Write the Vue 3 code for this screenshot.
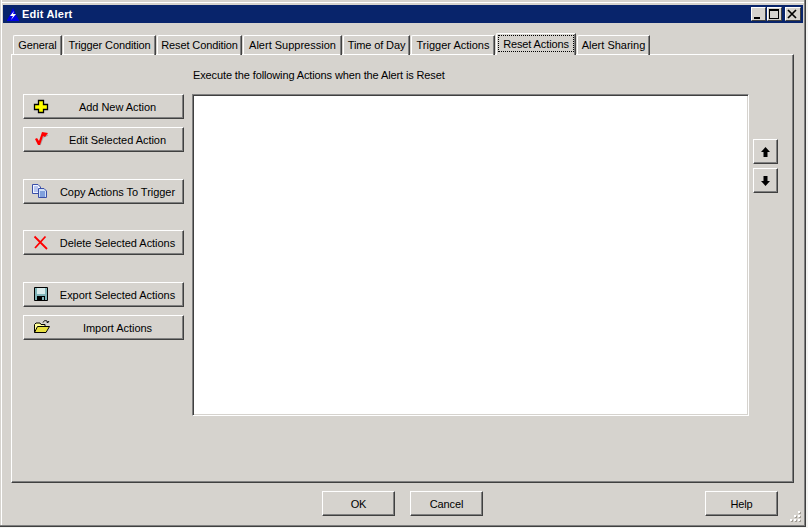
<script setup>
const tabs = [
  { label: 'General', w: 49 },
  { label: 'Trigger Condition', w: 93 },
  { label: 'Reset Condition', w: 85 },
  { label: 'Alert Suppression', w: 99, loose: true },
  { label: 'Time of Day', w: 67 },
  { label: 'Trigger Actions', w: 84, loose: true },
  { label: 'Reset Actions', w: 80, active: true },
  { label: 'Alert Sharing', w: 73, loose: true },
]
</script>

<template>
  <div class="window">
    <div class="titlebar">
      <svg class="app-icon" width="12" height="13" viewBox="0 0 12 13">
        <path d="M6 0L8 4V5L12 12V13H0V12L4 5V4Z" fill="#0000e8" />
        <path d="M7 3L3 8H6L4 12L9 6H6Z" fill="#fff" />
      </svg>
      <span class="title">Edit Alert</span>
      <div class="caption-buttons">
        <div class="cap"><svg width="14" height="12" viewBox="0 0 14 12"><rect x="3" y="9" width="6" height="2" fill="#000" /></svg></div>
        <div class="cap"><svg width="14" height="12" viewBox="0 0 14 12"><path d="M2 1H12V11H2Z M3 3V10H11V3Z" fill="#000" fill-rule="evenodd" /></svg></div>
        <div class="cap cap-close"><svg width="14" height="12" viewBox="0 0 14 12"><path d="M3 2L11 10M11 2L3 10" stroke="#000" stroke-width="1.7" fill="none" /></svg></div>
      </div>
    </div>

    <div class="tabs">
      <div v-for="t in tabs" :key="t.label" class="tab" :class="{ active: t.active, loose: t.loose }" :style="{ width: t.w + 'px' }">
        <span class="tab-label">{{ t.label }}</span>
      </div>
    </div>

    <div class="panel">
      <div class="caption">Execute the following Actions when the Alert is Reset</div>
      <div class="panel-body">
        <div class="actions">
          <button class="btn action">
            <svg class="ico" width="16" height="16" viewBox="0 0 16 16"><path d="M5.5 2.5H10.5V6.5H14.5V11.5H10.5V14.5H5.5V11.5H1.5V6.5H5.5Z" fill="#ffff00" stroke="#000" stroke-width="1.3" /></svg>
            Add New Action
          </button>
          <button class="btn action">
            <svg class="ico" width="16" height="16" viewBox="0 0 16 16"><path d="M7 14L10 6L15 4" stroke="#a8a8a8" stroke-width="1.5" fill="none" /><path d="M2 8L4 7L6 10L9 1L15 2L12 6L10 5L7 14H5Z" fill="#ff0000" /></svg>
            Edit Selected Action
          </button>
          <button class="btn action gap-lg">
            <svg class="ico ico-copy" width="16" height="16" viewBox="0 0 16 16"><path d="M0.5 1.5H6L8.5 4V10.5H0.5Z" fill="#f0f4ff" stroke="#3a4fa8" /><path d="M2 4H6M2 6H6M2 8H6" stroke="#8098e0" /><path d="M6.5 5.5H12L14.5 8V14.5H6.5Z" fill="#d0e0f8" stroke="#3a4fa8" /><path d="M8 9H13M8 11H13M8 13H13" stroke="#3060c0" /></svg>
            Copy Actions To Trigger
          </button>
          <button class="btn action gap-md">
            <svg class="ico" width="16" height="16" viewBox="0 0 16 16"><path d="M1.5 2.5L14 15M12.5 2.5L2 14" stroke="#ff0000" stroke-width="1.8" fill="none" /></svg>
            Delete Selected Actions
          </button>
          <button class="btn action gap-lg">
            <svg class="ico" width="16" height="16" viewBox="0 0 16 16"><path d="M1.5 1.5H14.5V14.5H1.5Z" fill="#7fb4b8" stroke="#000" /><rect x="4" y="2" width="8" height="6" fill="#d8ecec" /><rect x="4" y="10" width="8" height="5" fill="#000" /><rect x="9" y="11" width="2" height="3" fill="#7fb4b8" /></svg>
            Export Selected Actions
          </button>
          <button class="btn action">
            <svg class="ico" width="17" height="16" viewBox="0 0 17 16"><path d="M1.5 13.5V5.5L3 4H7L8 5.5H12V7.5" fill="#ffff99" stroke="#000" /><path d="M1.5 13.5L4.5 7.5H16.5L13 13.5Z" fill="#e8e040" stroke="#000" /><path d="M10 3.5C11 1 14 1 15 3.5M15 3.5L13.5 3M15 3.5L16 2" stroke="#000" fill="none" /></svg>
            Import Actions
          </button>
        </div>
        <div class="list"></div>
        <div class="arrows">
          <button class="btn arrow">
            <svg width="11" height="12" viewBox="0 0 11 12"><path d="M5.5 1L10 6H7.5V11H3.5V6H1Z" fill="#000" /></svg>
          </button>
          <button class="btn arrow">
            <svg width="11" height="12" viewBox="0 0 11 12"><path d="M5.5 11L10 6H7.5V1H3.5V6H1Z" fill="#000" /></svg>
          </button>
        </div>
      </div>
    </div>

    <div class="footer">
      <button class="btn dialog">OK</button>
      <button class="btn dialog">Cancel</button>
      <button class="btn dialog help">Help</button>
    </div>

    <svg class="grip" width="12" height="12" viewBox="0 0 12 12">
      <path d="M9 1h2v2H9zM5 5h2v2H5zM9 5h2v2H9zM1 9h2v2H1zM5 9h2v2H5zM9 9h2v2H9z" fill="#a09c94" />
      <path d="M8 0h2v2H8zM4 4h2v2H4zM8 4h2v2H8zM0 8h2v2H0zM4 8h2v2H4zM8 8h2v2H8z" fill="#fff" />
    </svg>
  </div>
</template>

<style>
html, body { margin: 0; background: #f4f4f2; }
</style>

<style scoped>
.window {
  position: relative;
  box-sizing: border-box;
  width: 806px;
  height: 527px;
  display: flex;
  flex-direction: column;
  background: #d6d3ce;
  border-right: 1px solid #404040;
  border-bottom: 1px solid #404040;
  font-family: "Liberation Sans", Arial, sans-serif;
  font-size: 11px;
  letter-spacing: -0.12px;
  color: #000;
  box-shadow: inset -1px -1px 0 #808080, inset 1px 0 0 #d6d3ce, inset 2px 0 0 #fff, inset 0 2px 0 #d6d3ce, inset 0 3px 0 #fff;
}
.titlebar {
  display: flex;
  align-items: center;
  height: 18px;
  margin: 5px 2px 0 3px;
  background: #08246b;
  color: #fff;
}
.app-icon { margin-left: 4px; flex: none; }
.title { margin-left: 3px; font-weight: bold; font-size: 11px; letter-spacing: 0.2px; }
.caption-buttons { margin-left: auto; display: flex; margin-right: 2px; }
.cap {
  box-sizing: border-box;
  width: 15px;
  height: 14px;
  margin-left: 1px;
  background: #d6d3ce;
  border: 1px solid;
  border-color: #fff #404040 #404040 #fff;
  display: flex;
}
.cap svg { flex: none; margin: 0 0 0 -1px; }
.cap-close { margin-left: 3px; width: 16px; }
.tabs {
  display: flex;
  height: 19px;
  margin: 12px 0 0 13px;
  position: relative;
  z-index: 1;
}
.tab {
  box-sizing: border-box;
  flex: none;
  height: 20px;
  margin-right: 1px;
  border: 1px solid;
  border-color: #fff #404040 transparent #fff;
  border-top-left-radius: 2px;
  border-bottom: 0;
  box-shadow: inset -1px 0 0 #808080;
  text-align: center;
  line-height: 19px;
  white-space: nowrap;
}
.tab.loose { letter-spacing: 0; }
.tab.active {
  height: 22px;
  margin-top: -2px;
  line-height: 16px;
  padding: 1px;
  background: #d6d3ce;
}
.tab.active .tab-label {
  display: block;
  box-sizing: border-box;
  height: 17px;
  border: 1px dotted #000;
}
.panel {
  box-sizing: border-box;
  height: 429px;
  margin: 0 11px;
  padding: 12px 0 0 11px;
  border: 1px solid;
  border-color: #fff #404040 #404040 #fff;
  box-shadow: inset -1px -1px 0 #808080;
  flex: none;
}
.caption {
  height: 16px;
  line-height: 16px;
  margin: 0 0 11px 170px;
  white-space: nowrap;
}
.panel-body {
  display: flex;
}
.actions {
  display: flex;
  flex-direction: column;
  width: 161px;
  gap: 8px;
  flex: none;
}
.btn {
  box-sizing: border-box;
  position: relative;
  background: #d6d3ce;
  border: 1px solid;
  border-color: #fff #404040 #404040 #fff;
  box-shadow: inset -1px -1px 0 #808080;
  font: inherit;
  letter-spacing: inherit;
  color: #000;
  padding: 0;
  margin: 0;
}
.action {
  height: 25px;
  width: 161px;
  padding-left: 28px;
  letter-spacing: -0.04px;
  text-align: center;
  white-space: nowrap;
}
.gap-lg { margin-top: 19px; }
.gap-md { margin-top: 18px; }
.ico {
  position: absolute;
  left: 9px;
  top: 3px;
}
.ico-copy { left: 8px; }
.list {
  box-sizing: border-box;
  width: 557px;
  height: 322px;
  margin-left: 8px;
  background: #fff;
  border: 1px solid;
  border-color: #808080 #fff #fff #808080;
  box-shadow: inset 1px 1px 0 #404040, inset -1px -1px 0 #d6d3ce;
  flex: none;
}
.arrows {
  display: flex;
  flex-direction: column;
  gap: 4px;
  margin: 45px 0 0 4px;
  flex: none;
}
.arrow {
  width: 25px;
  height: 25px;
  display: flex;
  align-items: center;
  justify-content: center;
}
.footer {
  display: flex;
  gap: 15px;
  padding: 8px 27px 0 322px;
}
.dialog {
  width: 73px;
  height: 25px;
}
.help { margin-left: auto; }
.grip {
  position: absolute;
  right: 3px;
  bottom: 3px;
}
</style>
